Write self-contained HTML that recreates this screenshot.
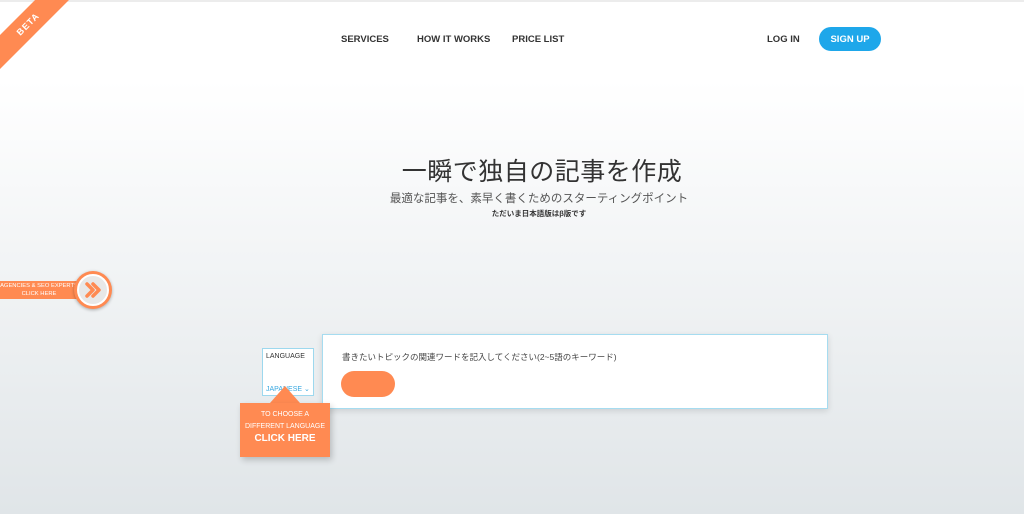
<!DOCTYPE html>
<html><head><meta charset="utf-8"><style>
*{margin:0;padding:0;box-sizing:border-box}
body{width:1024px;height:514px;overflow:hidden;position:relative;font-family:"Liberation Sans","Noto Sans CJK JP",sans-serif;background:linear-gradient(#fff 0px,#fff 80px,#e0e5e8 514px)}
.topline{position:absolute;top:0;left:0;width:1024px;height:2px;background:#ececec}
.beta{position:absolute;left:-32px;top:12px;width:120px;height:24px;background:#ff8a52;transform:rotate(-45deg);color:#fff;font-weight:bold;font-size:9px;text-align:center;line-height:24px;letter-spacing:1px}
.nav{position:absolute;top:34px;font-size:9.5px;font-weight:bold;color:#333}
.signup{position:absolute;left:819px;top:27px;width:62px;height:24px;border-radius:12px;background:#1ea7ea;color:#fff;font-size:9.5px;font-weight:bold;display:flex;align-items:center;justify-content:center}
h1{position:absolute;left:0;width:1084px;top:152px;text-align:center;font-weight:normal;font-size:25px;color:#333;letter-spacing:0.5px}
.sub{position:absolute;left:0;width:1078px;top:190px;text-align:center;font-size:11.5px;color:#555}
.sub2{position:absolute;left:0;width:1078px;top:208px;text-align:center;font-size:7.5px;color:#333;font-weight:bold}
.agency{position:absolute;left:0;top:281px;width:90px;height:18px;background:#ff8a52;color:#fff;font-size:5.8px;line-height:8px;padding-top:1px;white-space:nowrap}
.agency span{display:inline-block;width:78px;text-align:center}
.circ{position:absolute;left:74px;top:271px;width:38px;height:38px;border-radius:50%;background:#ff8a52;box-shadow:0 1px 3px rgba(0,0,0,.3)}
.circ div{position:absolute;left:3px;top:3px;width:32px;height:32px;border-radius:50%;background:#e8e8e8;border:2px solid #fff}
.circ svg{position:absolute;left:6px;top:6px}
.lang{position:absolute;left:262px;top:348px;width:52px;height:48px;background:#fff;border:1px solid #9dd8ee;font-size:7px;color:#333;padding:4px 3px}
.lang span{position:absolute;bottom:2px;left:3px;color:#39a8e0;font-size:7px}
.box{position:absolute;left:322px;top:334px;width:506px;height:75px;background:#fff;border:1px solid #a6dcf0;box-shadow:0 2px 6px rgba(0,0,0,.12)}
.box p{position:absolute;left:19px;top:16px;font-size:8.5px;color:#444}
.btn{position:absolute;left:18px;top:36px;width:54px;height:26px;border-radius:13px;background:#ff8a52}
.tip{position:absolute;left:240px;top:403px;width:90px;height:54px;background:#ff8a52;color:#fff;text-align:center;font-size:7px;line-height:12px;padding-top:6px;box-shadow:2px 3px 6px rgba(0,0,0,.2)}
.tip b{font-size:10px}
.tri{position:absolute;left:270px;top:386px;width:0;height:0;border-left:15px solid transparent;border-right:15px solid transparent;border-bottom:17px solid #ff8a52}
</style></head><body>
<div class="topline"></div>
<div class="beta">BETA</div>
<div class="nav" style="left:341px">SERVICES</div>
<div class="nav" style="left:417px">HOW IT WORKS</div>
<div class="nav" style="left:512px">PRICE LIST</div>
<div class="nav" style="left:767px">LOG IN</div>
<div class="signup">SIGN UP</div>
<h1>一瞬で独自の記事を作成</h1>
<div class="sub">最適な記事を、素早く書くためのスターティングポイント</div>
<div class="sub2">ただいま日本語版はβ版です</div>
<div class="agency"><span>AGENCIES &amp; SEO EXPERTS<br>CLICK HERE</span></div>
<div class="circ"><div></div><svg width="26" height="26" viewBox="0 0 26 26"><path d="M7 7l6 6-6 6M13 7l6 6-6 6" fill="none" stroke="#ff8a52" stroke-width="3.5" stroke-linecap="round" stroke-linejoin="round"/></svg></div>
<div class="lang">LANGUAGE<span>JAPANESE ⌄</span></div>
<div class="box"><p>書きたいトピックの関連ワードを記入してください(2~5語のキーワード)</p><div class="btn"></div></div>
<div class="tri"></div>
<div class="tip">TO CHOOSE A<br>DIFFERENT LANGUAGE<br><b>CLICK HERE</b></div>
</body></html>
